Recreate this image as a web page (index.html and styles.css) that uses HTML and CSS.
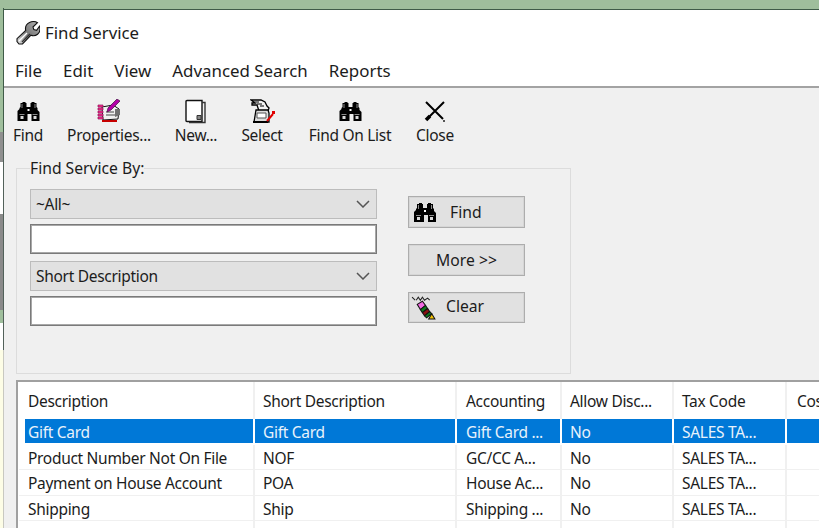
FILE: index.html
```html
<!DOCTYPE html>
<html lang="en">
<head>
<meta charset="utf-8">
<title>Find Service</title>
<link rel="stylesheet" href="styles.css">
</head>
<body>
<svg class="defs" width="0" height="0" aria-hidden="true">
  <symbol id="binoculars" viewBox="0 0 22 19">
    <path fill="#000" d="M3 1h2V0h3v1h1v4h4V1h1V0h3v1h2v4l1 1v2l2 2v9h-8v-7h-4v7H0V9l2-2V6l1-1z"/>
    <path fill="#8c8c8c" d="M4 2h1v4H4zM17 2h1v4h-1zM2 12h5v1H2zM15 12h5v1h-5z"/>
    <path fill="#d9d9d9" d="M3 14h3v3H3zM16 14h3v3h-3z"/>
    <path fill="#fff" d="M10 7h2v2h-2z"/>
  </symbol>
</svg>
<div class="page">
  <div class="strip">
    <i class="seg seg-green"></i>
    <i class="seg seg-grey-a"></i>
    <i class="seg seg-white-a"></i>
    <i class="seg seg-grey-b"></i>
    <i class="seg seg-green-b"></i>
    <i class="seg seg-white-b"></i>
    <i class="seg seg-yellow"></i>
  </div>
  <div class="main">
    <div class="desktop-top"></div>
    <div class="window">
      <header class="titlebar">
        <svg class="title-icon" width="24" height="24" viewBox="0 0 24 24">
          <defs><linearGradient id="steel" x1="0" y1="1" x2="1" y2="0"><stop offset="0" stop-color="#e8e8e8"/><stop offset=".45" stop-color="#777"/><stop offset="1" stop-color="#b5b5b5"/></linearGradient></defs>
          <path fill="url(#steel)" stroke="#111" stroke-width="1.100" d="M13.500 1.500c3-1.400 6-1 8 .2L17 6l.8 2.600 2.800.8 2.900-4.200c1 3 .3 6.200-1.900 8-2 1.600-4.500 1.800-6.600 1L6.500 23H3L1 20.500v-2.800l8.700-8.300C9 6.200 10.500 3 13.500 1.500z"/>
          <path fill="none" stroke="#fff" stroke-width="1.500" d="M3 20l8-8"/>
          <path fill="none" stroke="#333" stroke-width="1.200" d="M6 21l8-8"/>
        </svg>
        <span class="title-text">Find Service</span>
      </header>
      <nav class="menubar">
        <span>File</span><span>Edit</span><span>View</span><span>Advanced Search</span><span>Reports</span>
      </nav>
      <div class="content">
        <div class="toolbar">
          <div class="tool">
            <svg class="tool-icon bino" width="23" height="19"><use href="#binoculars"/></svg>
            <span>Find</span>
          </div>
          <div class="tool">
            <svg class="tool-icon" width="25" height="25" viewBox="0 0 25 25">
              <path fill="#f0f0f0" stroke="#111" d="M5 8l11-2 6 4-1 10-15 1z"/>
              <path fill="#ff2f92" stroke="#8a0f55" stroke-width=".7" d="M1 6h5v2H1zM1 9h5v2H1zM1 12h5v2H1zM1 15h5v2H1zM1 18h5v2H1z"/>
              <path stroke="#444" d="M9 13h8M9 16h9"/>
              <path fill="#707070" d="M18 10h5v6l-5 2z"/>
              <path fill="#b400a8" stroke="#40103f" stroke-width=".7" d="M20 0l3 2-9 9-4 2 1-4z"/>
              <path fill="#c60000" d="M5 21h15v2H5z"/>
            </svg>
            <span>Properties...</span>
          </div>
          <div class="tool">
            <svg class="tool-icon" width="22" height="24" viewBox="0 0 22 24">
              <path fill="#fff" stroke="#111" stroke-width="1.400" d="M1 2q0-1 1-1h15v21H2q-1 0-1-1z"/>
              <path fill="none" stroke="#333" stroke-width="1.400" d="M17 3h3v20H4"/>
              <path fill="#888" stroke="#333" d="M12 16h4v4h-4z"/>
            </svg>
            <span>New...</span>
          </div>
          <div class="tool">
            <svg class="tool-icon" width="25" height="25" viewBox="0 0 25 25">
              <path fill="#f4f4f4" stroke="#000" stroke-width="1.300" d="M1 1h10l4 2 2 4 2 2-1 3H9L7 6H2V4h3z"/>
              <path stroke="#000" stroke-width="1.200" d="M3 3h6M7 5h5M10 7h4"/>
              <path fill="#dcdcdc" stroke="#000" stroke-width="1.300" d="M6 11h12l1 3v9H4z"/>
              <path fill="#fff" stroke="#555" d="M7 14h9v5H7z"/>
              <path stroke="#000" stroke-width="2" d="M3 23h15"/>
              <path stroke="#e00000" stroke-width="2" d="M17 22l6-7"/>
              <path fill="#e00000" d="M22 12h3v3h-3z"/>
            </svg>
            <span>Select</span>
          </div>
          <div class="tool">
            <svg class="tool-icon bino" width="23" height="19"><use href="#binoculars"/></svg>
            <span>Find On List</span>
          </div>
          <div class="tool">
            <svg class="tool-icon close-icon" width="22" height="21" viewBox="0 0 22 21">
              <path fill="none" stroke="#000" stroke-width="2" d="M2 1l17 17M20 1L4 17"/>
              <path fill="none" stroke="#000" stroke-width="3.500" d="M6 15l-4 4"/>
              <path fill="#555" d="M19 19h2v2h-2z"/>
            </svg>
            <span>Close</span>
          </div>
        </div>

        <fieldset class="search">
          <legend>Find Service By:</legend>
          <div class="search-grid">
            <div class="fields">
              <div class="combo combo-first">
                <span>~All~</span>
                <svg width="14" height="8" viewBox="0 0 14 8"><path fill="none" stroke="#555" stroke-width="1.500" d="M1 1l6 6 6-6"/></svg>
              </div>
              <div class="textbox"></div>
              <div class="combo">
                <span>Short Description</span>
                <svg width="14" height="8" viewBox="0 0 14 8"><path fill="none" stroke="#555" stroke-width="1.500" d="M1 1l6 6 6-6"/></svg>
              </div>
              <div class="textbox"></div>
            </div>
            <div class="actions">
              <div class="btn btn-find">
                <svg width="22" height="19"><use href="#binoculars"/></svg>
                <span>Find</span>
              </div>
              <div class="btn btn-more"><span>More &gt;&gt;</span></div>
              <div class="btn btn-clear">
                <svg width="27" height="24" viewBox="0 0 26 23">
                  <path fill="none" stroke="#222" stroke-width="1" d="M1 1l3 3M5 4l2-3 2 3 2-3 2 3 3-2 2 2"/>
                  <path fill="#f06be0" stroke="#111" d="M6 8l5-3 3 4-5 4z"/>
                  <path fill="#0c7a1e" stroke="#111" d="M9 13l5-4 2 3-5 4z"/>
                  <path fill="#8a1010" stroke="#111" d="M11 16l5-4 2 3-5 4z"/>
                  <path fill="#0c7a1e" stroke="#111" d="M13 19l5-4 2 2-5 4z"/>
                  <path fill="#f5c400" stroke="#111" d="M17 22l3-5 3 5z"/>
                </svg>
                <span>Clear</span>
              </div>
            </div>
          </div>
        </fieldset>

        <div class="list">
          <div class="row head">
            <div class="cell c1">Description</div><div class="cell c2">Short Description</div><div class="cell c3">Accounting</div><div class="cell c4">Allow Disc...</div><div class="cell c5">Tax Code</div><div class="cell c6">Cos</div>
          </div>
          <div class="row selected">
            <div class="cell c1">Gift Card</div><div class="cell c2">Gift Card</div><div class="cell c3">Gift Card ...</div><div class="cell c4">No</div><div class="cell c5">SALES TA...</div><div class="cell c6"></div>
          </div>
          <div class="row">
            <div class="cell c1">Product Number Not On File</div><div class="cell c2">NOF</div><div class="cell c3">GC/CC A...</div><div class="cell c4">No</div><div class="cell c5">SALES TA...</div><div class="cell c6"></div>
          </div>
          <div class="row">
            <div class="cell c1">Payment on House Account</div><div class="cell c2">POA</div><div class="cell c3">House Ac...</div><div class="cell c4">No</div><div class="cell c5">SALES TA...</div><div class="cell c6"></div>
          </div>
          <div class="row">
            <div class="cell c1">Shipping</div><div class="cell c2">Ship</div><div class="cell c3">Shipping ...</div><div class="cell c4">No</div><div class="cell c5">SALES TA...</div><div class="cell c6"></div>
          </div>
          <div class="row">
            <div class="cell c1">Delivery Fee</div><div class="cell c2">Delivery Fee</div><div class="cell c3">Delivery ...</div><div class="cell c4">No</div><div class="cell c5">SALES TA...</div><div class="cell c6"></div>
          </div>
        </div>
      </div>
    </div>
  </div>
</div>
</body>
</html>
```

FILE: styles.css
```css
html, body {
  margin: 0;
  height: 100%;
  overflow: hidden;
  background: #f0f0f0;
}
body {
  font-family: "Noto Sans", "Open Sans", sans-serif;
  font-size: 15.5px;
  letter-spacing: -0.3px;
  color: #1c1c1c;
}
.defs { position: absolute; }
.page {
  display: flex;
  width: 819px;
  height: 528px;
  overflow: hidden;
}
.strip {
  display: flex;
  flex-direction: column;
  width: 4px;
  flex: none;
}
.seg { display: block; box-sizing: border-box; border-right: 1px solid #52615a; }
.seg-green { height: 132px; background: #9fbe9c; border-image: linear-gradient(#9fbe9c 9px, #3f5b48 9px) 1; }
.seg-grey-a { height: 30px; background: #8f8f8f; }
.seg-white-a { height: 52px; background: #fff; }
.seg-grey-b { height: 96px; background: #8a8a8a; }
.seg-green-b { height: 13px; background: #9fbe9c; }
.seg-white-b { height: 27px; background: #fff; }
.seg-yellow { flex: 1; background: #fdfde6; border-right-color: #c8c8c0; }

.main { flex: 1; min-width: 0; display: flex; flex-direction: column; }
.desktop-top { height: 9px; background: #9fbe9c; border-bottom: 1px solid #3f5b48; flex: none; }
.window { flex: 1; display: flex; flex-direction: column; background: #fff; min-height: 0; }

.titlebar { display: flex; align-items: center; height: 46px; padding-left: 12px; gap: 5px; flex: none; font-size: 16.8px; letter-spacing: 0; }
.title-text { margin-top: -2px; }
.title-icon { flex: none; }
.menubar { display: flex; align-items: center; height: 30px; padding: 0 0 2px 11px; box-sizing: border-box; gap: 21px; flex: none; font-size: 16.9px; letter-spacing: 0; }
.content { flex: 1; background: #f0f0f0; border-top: 2px solid #a3a3a3; min-height: 0; }

.toolbar {
  display: grid;
  grid-template-columns: 48px 114px 60px 72px 104px 66px;
  width: max-content;
  height: 67px;
  padding-top: 11px;
  box-sizing: border-box;
}
.tool { display: flex; flex-direction: column; align-items: center; white-space: nowrap; }
.tool-icon { height: 25px; display: block; flex: none; }
.tool .bino { height: 19px; margin: 3px 0; }
.tool .close-icon { height: 21px; margin: 2px 0; }
.tool span { line-height: 24px; margin-top: -1px; }

.search {
  box-sizing: border-box;
  width: 555px;
  height: 216px;
  margin: 3px 0 0 12px;
  padding: 11px 0 0 13px;
  border: 1px solid #dcdcdc;
  min-width: 0;
}
.search legend { padding: 0; line-height: 20px; font-size: 15.7px; letter-spacing: 0; }
.search-grid { display: flex; gap: 31px; }
.fields { display: flex; flex-direction: column; width: 347px; }
.combo {
  box-sizing: border-box;
  height: 30px;
  margin-top: 7px;
  display: flex;
  align-items: center;
  justify-content: space-between;
  padding: 0 6px 0 5px;
  background: #e1e1e1;
  border: 1px solid #bcbcbc;
}
.combo-first { margin-top: 0; }
.textbox {
  box-sizing: border-box;
  height: 30px;
  margin-top: 5px;
  background: #fff;
  border: 1px solid #7a7a7a;
  box-shadow: inset 0 0 0 1px #a8a8a8;
}
.actions { display: flex; flex-direction: column; gap: 16px; padding-top: 7px; font-size: 15.7px; letter-spacing: 0; }
.btn {
  box-sizing: border-box;
  width: 117px;
  height: 32px;
  flex: none;
  display: flex;
  align-items: center;
  background: #e1e1e1;
  border: 1px solid #adadad;
  box-shadow: inset 0 0 0 1px #d6d6d6;
}
.btn-find { padding-left: 5px; gap: 14px; }
.btn-more { justify-content: center; }
.btn-clear { height: 31px; padding-left: 2px; gap: 8px; line-height: 26px; }
.btn-clear span { margin-top: -3px; }

.list {
  margin: 6px 0 0 12px;
  background: #fff;
  border-top: 2px solid #a0a0a0;
  border-left: 2px solid #a0a0a0;
  padding-left: 1px;
}
.row {
  display: flex;
  box-sizing: border-box;
  height: 25.5px;
  line-height: 27px;
  border-bottom: 1px solid #f0f0f0;
  white-space: nowrap;
  width: 900px;
}
.cell {
  box-sizing: border-box;
  height: 100%;
  border-right: 2px solid #f0f0f0;
  padding-left: 8px;
  flex: none;
  overflow: hidden;
}
.c1 { width: 236px; padding-left: 9px; }
.c2 { width: 202px; }
.c3 { width: 105px; padding-left: 9px; }
.c4 { width: 112px; }
.c5 { width: 113px; }
.c6 { width: 130px; padding-left: 10px; }
.head { height: 37px; line-height: 39px; border-bottom: 0; }
.selected { border-bottom: 2px solid #fff; }
.selected .cell { background: #0078d7; color: #e8f2fb; border-right-color: #fff; }
.selected .c1 { margin-left: 6px; width: 230px; padding-left: 3px; }
```
